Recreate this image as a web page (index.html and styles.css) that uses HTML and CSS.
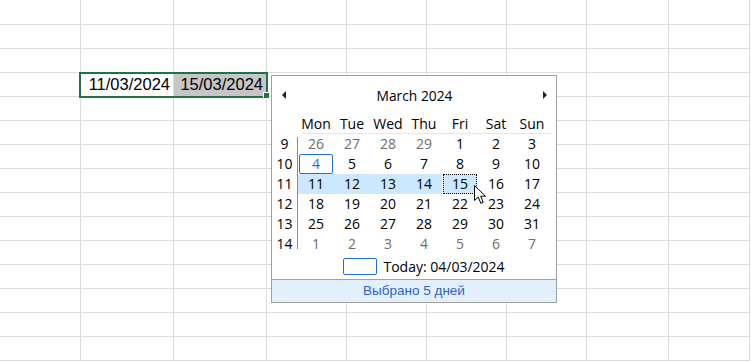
FILE: index.html
```html
<!DOCTYPE html>
<html>
<head>
<meta charset="utf-8">
<link rel="stylesheet" href="styles.css">
</head>
<body>
<div class="sheet">
  <div class="row first"><div class="c w1"></div><div class="c w2"></div><div class="c w2"></div><div class="c w3"></div><div class="c w3"></div><div class="c w3"></div><div class="c w3"></div><div class="c w4"></div><div class="c w5"></div></div>
  <div class="row"><div class="c w1"></div><div class="c w2"></div><div class="c w2"></div><div class="c w3"></div><div class="c w3"></div><div class="c w3"></div><div class="c w3"></div><div class="c w4"></div><div class="c w5"></div></div>
  <div class="row"><div class="c w1"></div><div class="c w2"></div><div class="c w2"></div><div class="c w3"></div><div class="c w3"></div><div class="c w3"></div><div class="c w3"></div><div class="c w4"></div><div class="c w5"></div></div>
  <div class="row"><div class="c w1"></div><div class="c w2 val">11/03/2024</div><div class="c w2 val sel">15/03/2024</div><div class="c w3"></div><div class="c w3"></div><div class="c w3"></div><div class="c w3"></div><div class="c w4"></div><div class="c w5"></div></div>
  <div class="row"><div class="c w1"></div><div class="c w2"></div><div class="c w2"></div><div class="c w3"></div><div class="c w3"></div><div class="c w3"></div><div class="c w3"></div><div class="c w4"></div><div class="c w5"></div></div>
  <div class="row"><div class="c w1"></div><div class="c w2"></div><div class="c w2"></div><div class="c w3"></div><div class="c w3"></div><div class="c w3"></div><div class="c w3"></div><div class="c w4"></div><div class="c w5"></div></div>
  <div class="row"><div class="c w1"></div><div class="c w2"></div><div class="c w2"></div><div class="c w3"></div><div class="c w3"></div><div class="c w3"></div><div class="c w3"></div><div class="c w4"></div><div class="c w5"></div></div>
  <div class="row"><div class="c w1"></div><div class="c w2"></div><div class="c w2"></div><div class="c w3"></div><div class="c w3"></div><div class="c w3"></div><div class="c w3"></div><div class="c w4"></div><div class="c w5"></div></div>
  <div class="row"><div class="c w1"></div><div class="c w2"></div><div class="c w2"></div><div class="c w3"></div><div class="c w3"></div><div class="c w3"></div><div class="c w3"></div><div class="c w4"></div><div class="c w5"></div></div>
  <div class="row"><div class="c w1"></div><div class="c w2"></div><div class="c w2"></div><div class="c w3"></div><div class="c w3"></div><div class="c w3"></div><div class="c w3"></div><div class="c w4"></div><div class="c w5"></div></div>
  <div class="row"><div class="c w1"></div><div class="c w2"></div><div class="c w2"></div><div class="c w3"></div><div class="c w3"></div><div class="c w3"></div><div class="c w3"></div><div class="c w4"></div><div class="c w5"></div></div>
  <div class="row"><div class="c w1"></div><div class="c w2"></div><div class="c w2"></div><div class="c w3"></div><div class="c w3"></div><div class="c w3"></div><div class="c w3"></div><div class="c w4"></div><div class="c w5"></div></div>
  <div class="row"><div class="c w1"></div><div class="c w2"></div><div class="c w2"></div><div class="c w3"></div><div class="c w3"></div><div class="c w3"></div><div class="c w3"></div><div class="c w4"></div><div class="c w5"></div></div>
  <div class="row"><div class="c w1"></div><div class="c w2"></div><div class="c w2"></div><div class="c w3"></div><div class="c w3"></div><div class="c w3"></div><div class="c w3"></div><div class="c w4"></div><div class="c w5"></div></div>
  <div class="row"><div class="c w1"></div><div class="c w2"></div><div class="c w2"></div><div class="c w3"></div><div class="c w3"></div><div class="c w3"></div><div class="c w3"></div><div class="c w4"></div><div class="c w5"></div></div>

  <div class="selection"></div>
  <div class="handle"></div>

  <div class="popup">
    <div class="cal-head">
      <span class="arrow left"></span>
      <span class="title">March 2024</span>
      <span class="arrow right"></span>
    </div>
    <div class="dow">
      <span>Mon</span><span>Tue</span><span>Wed</span><span>Thu</span><span>Fri</span><span>Sat</span><span>Sun</span>
    </div>
    <div class="cal-body">
      <div class="weeks">
        <span>9</span><span>10</span><span>11</span><span>12</span><span>13</span><span>14</span>
      </div>
      <div class="wline"></div>
      <div class="days">
        <span class="o">26</span><span class="o">27</span><span class="o">28</span><span class="o">29</span><span>1</span><span>2</span><span>3</span>
        <span class="today">4</span><span>5</span><span>6</span><span>7</span><span>8</span><span>9</span><span>10</span>
        <span class="hl">11</span><span class="hl">12</span><span class="hl">13</span><span class="hl">14</span><span class="hl focus">15</span><span>16</span><span>17</span>
        <span>18</span><span>19</span><span>20</span><span>21</span><span>22</span><span>23</span><span>24</span>
        <span>25</span><span>26</span><span>27</span><span>28</span><span>29</span><span>30</span><span>31</span>
        <span class="o">1</span><span class="o">2</span><span class="o">3</span><span class="o">4</span><span class="o">5</span><span class="o">6</span><span class="o">7</span>
      </div>
    </div>
    <div class="today-line">
      <span class="tbox"></span>
      <span>Today: 04/03/2024</span>
    </div>
    <div class="footer">Выбрано 5 дней</div>
  </div>

  <svg class="cursor" width="13" height="20" viewBox="0 0 13 20">
    <path d="M0.5 0.5 L0.5 15.5 L4.2 12 L6.8 18.3 L9.2 17.3 L6.7 11.2 L11.5 11.2 Z" fill="#fff" stroke="#000" stroke-width="1" stroke-linejoin="miter"/>
  </svg>
</div>
</body>
</html>
```

FILE: styles.css
```css
html, body {
  margin: 0;
  padding: 0;
  background: #fff;
}

.sheet {
  position: relative;
  width: 751px;
  height: 362px;
  overflow: hidden;
  font-family: "Liberation Sans", Arial, sans-serif;
}

.row {
  display: flex;
  height: 24px;
}

.row.first {
  height: 25px;
}

.c {
  box-sizing: border-box;
  height: 100%;
  border-right: 1px solid #dcdcdc;
  border-bottom: 1px solid #dcdcdc;
  flex: none;
}

.c.w1 { width: 81px; }
.c.w2 { width: 93px; }
.c.w3 { width: 80px; }
.c.w4 { width: 82px; }
.c.w5 { width: 81px; }

.c.val {
  font-size: 16.5px;
  line-height: 23px;
  text-align: right;
  padding-right: 3px;
  color: #000;
}

.c.sel {
  background: #c6c6c6;
}

.selection {
  position: absolute;
  left: 79px;
  top: 72px;
  width: 189px;
  height: 26px;
  box-sizing: border-box;
  border: 2px solid #217346;
}

.handle {
  position: absolute;
  left: 263px;
  top: 92px;
  width: 5px;
  height: 5px;
  background: #217346;
  border: 1px solid #fff;
}

.popup {
  position: absolute;
  left: 271px;
  top: 75px;
  width: 286px;
  height: 228px;
  box-sizing: border-box;
  border: 1px solid #a0a0a0;
  background: #fff;
  font-family: "Open Sans", "Noto Sans", sans-serif;
  font-size: 14px;
  color: #000;
  display: flex;
  flex-direction: column;
}

.cal-head {
  height: 38px;
  display: flex;
  align-items: center;
  justify-content: space-between;
  padding: 0 9px 0 10px;
}

.title {
  font-size: 13.8px;
}

.arrow {
  width: 0;
  height: 0;
  border-top: 4px solid transparent;
  border-bottom: 4px solid transparent;
}

.arrow.left { border-right: 4px solid #222; }
.arrow.right { border-left: 4px solid #222; }

.dow {
  display: grid;
  grid-template-columns: repeat(7, 36px);
  margin-left: 26px;
  height: 19px;
  line-height: 19px;
  text-align: center;
  position: relative;
}

.dow::after {
  content: "";
  position: absolute;
  left: 4px;
  right: 5px;
  bottom: -1px;
  height: 1px;
  background: #e6e6e6;
}

.cal-body {
  display: flex;
  margin-top: 1px;
}

.weeks {
  width: 25px;
  display: grid;
  grid-auto-rows: 20px;
  line-height: 20px;
  text-align: center;
}

.wline {
  width: 1px;
  background: #8c8c8c;
  margin: 3px 0 5px;
}

.days {
  display: grid;
  grid-template-columns: repeat(7, 36px);
  grid-auto-rows: 20px;
  line-height: 18px;
  text-align: center;
}

.days span {
  box-sizing: border-box;
  border: 1px solid transparent;
}

.days .o { color: #6d6d6d; }

.days .today {
  border-color: #1a6fd8;
  border-radius: 2px;
  color: #1a6fd8;
  margin-left: 1px;
  margin-right: 1px;
}

.days .hl { background: #cce8ff; }

.days .focus {
  border: 1px dotted #000;
  margin: 0 1px;
}

.today-line {
  display: flex;
  align-items: center;
  justify-content: center;
  gap: 6px;
  height: 22px;
  margin-top: 1px;
  padding-left: 20px;
}

.tbox {
  width: 34px;
  height: 17px;
  box-sizing: border-box;
  border: 1px solid #1a6fd8;
  border-radius: 2px;
}

.footer {
  margin-top: auto;
  height: 22px;
  border-top: 1px solid #a0a0a0;
  background: #e3f0fb;
  color: #2d64c8;
  font-family: "Liberation Sans", Arial, sans-serif;
  font-size: 13.5px;
  line-height: 22px;
  text-align: center;
}

.cursor {
  position: absolute;
  left: 474px;
  top: 185px;
}
```
